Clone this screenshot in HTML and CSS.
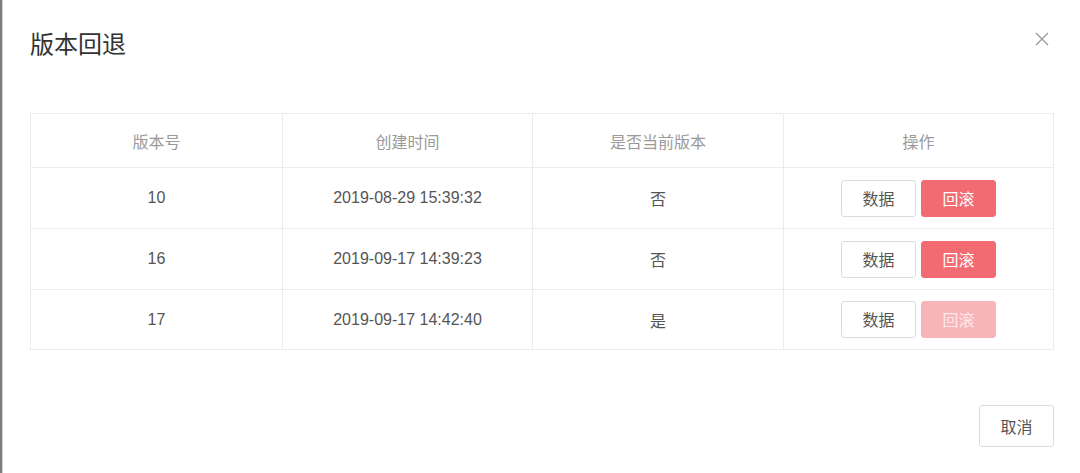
FILE: index.html
```html
<!DOCTYPE html>
<html lang="zh-CN">
<head>
<meta charset="utf-8">
<title>版本回退</title>
<link rel="stylesheet" href="styles.css">
</head>
<body>
<div class="dialog">
  <div class="dialog-header">
    <h1 class="dialog-title">版本回退</h1>
    <button class="close" aria-label="关闭">
      <svg width="14" height="14" viewBox="0 0 14 14"><path d="M1 1L13 13M13 1L1 13" stroke="#9a9a9a" stroke-width="1.4" fill="none"/></svg>
    </button>
  </div>
  <div class="dialog-body">
    <table class="versions">
      <colgroup>
        <col class="c1"><col class="c2"><col class="c3"><col class="c4">
      </colgroup>
      <thead>
        <tr><th>版本号</th><th>创建时间</th><th>是否当前版本</th><th>操作</th></tr>
      </thead>
      <tbody>
        <tr>
          <td>10</td><td>2019-08-29 15:39:32</td><td>否</td>
          <td><div class="ops"><button class="btn">数据</button><button class="btn btn-danger">回滚</button></div></td>
        </tr>
        <tr>
          <td>16</td><td>2019-09-17 14:39:23</td><td>否</td>
          <td><div class="ops"><button class="btn">数据</button><button class="btn btn-danger">回滚</button></div></td>
        </tr>
        <tr class="last">
          <td>17</td><td>2019-09-17 14:42:40</td><td>是</td>
          <td><div class="ops"><button class="btn">数据</button><button class="btn btn-danger is-disabled">回滚</button></div></td>
        </tr>
      </tbody>
    </table>
  </div>
  <div class="dialog-footer">
    <button class="btn btn-cancel">取消</button>
  </div>
</div>
</body>
</html>
```
FILE: styles.css
```css
html, body {
  margin: 0;
  padding: 0;
  background: #fff;
}
body {
  font-family: "Liberation Sans", "Noto Sans CJK SC", sans-serif;
  color: #555;
  width: 1080px;
  height: 473px;
  overflow: hidden;
  box-sizing: border-box;
  border-left: 2px solid #7d7d7d;
}
.dialog {
  height: 473px;
  box-shadow: inset 1px 0 0 #d4d4d4;
  padding: 0 26px 0 28px;
  display: flex;
  flex-direction: column;
}
.dialog-header {
  display: flex;
  justify-content: space-between;
  align-items: center;
  padding-top: 27px;
  height: 32px;
}
.dialog-title {
  margin: 0;
  font-size: 24px;
  font-weight: 400;
  line-height: 32px;
  color: #333;
  font-family: "Noto Sans CJK SC", sans-serif;
}
.close {
  border: 0;
  background: none;
  padding: 0;
  margin-right: 5px;
  margin-top: -8px;
  width: 14px;
  height: 14px;
  display: flex;
}
.dialog-body {
  padding-top: 54px;
}
.versions {
  width: 1023px;
  border-collapse: collapse;
  table-layout: fixed;
  font-size: 16px;
}
.c1 { width: 252px; }
.c2 { width: 250px; }
.c3 { width: 251px; }
.c4 { width: 270px; }
.versions th, .versions td {
  border: 1px solid #ebebeb;
  text-align: center;
  padding: 0;
}
.versions th {
  height: 53px;
  font-weight: 400;
  color: #9a9a9a;
}
.versions td {
  height: 60px;
  color: #555;
}
.versions tr.last td {
  height: 59px;
}
.ops {
  display: flex;
  justify-content: center;
  gap: 5px;
}
.btn {
  font-family: "Noto Sans CJK SC", sans-serif;
  font-size: 16px;
  height: 37px;
  width: 75px;
  border-radius: 3px;
  border: 1px solid #dcdcdc;
  background: #fff;
  color: #555;
  padding: 0;
  line-height: 35px;
}
.btn-danger {
  background: #f26b72;
  border-color: #f26b72;
  color: #fff;
}
.btn-danger.is-disabled {
  background: #f8b5b8;
  border-color: #f8b5b8;
  color: #fde9ea;
}
.dialog-footer {
  display: flex;
  justify-content: flex-end;
  padding-top: 55px;
}
.btn-cancel {
  height: 42px;
  width: 75px;
  line-height: 40px;
}
```
